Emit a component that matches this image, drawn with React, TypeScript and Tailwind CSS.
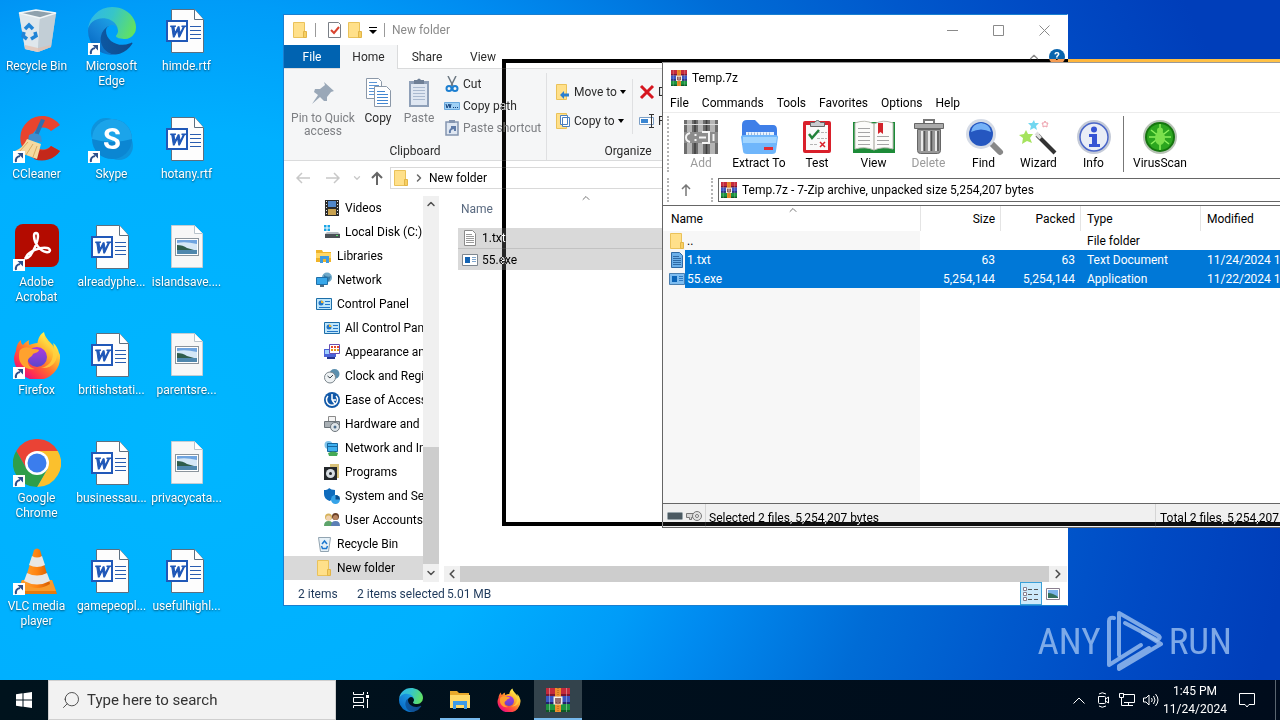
import type { ReactNode } from "react";
import { ChevronDown, ChevronLeft, ChevronRight, ChevronUp, Search } from "lucide-react";

/* ---------- desktop icons ---------- */

function EdgeIcon({ className }: { className: string }) {
  return (
    <svg viewBox="0 0 256 256" className={className}>
      <defs>
        <linearGradient id="edgeA" x1="0" y1="0.5" x2="1" y2="0.5">
          <stop offset="0" stopColor="#0c59a4" />
          <stop offset="1" stopColor="#114a8b" />
        </linearGradient>
        <linearGradient id="edgeB" x1="0.8" y1="0.2" x2="0.2" y2="1">
          <stop offset="0" stopColor="#1b9de2" />
          <stop offset="0.5" stopColor="#1580d4" />
          <stop offset="1" stopColor="#0067c0" />
        </linearGradient>
        <linearGradient id="edgeC" x1="0" y1="0.3" x2="1" y2="0.6">
          <stop offset="0" stopColor="#2fb8e8" />
          <stop offset="0.45" stopColor="#36c5c9" />
          <stop offset="1" stopColor="#62e25f" />
        </linearGradient>
      </defs>
      <g transform="translate(-4.63 -4.92)">
        <path fill="url(#edgeA)" d="M235.68 195.46a93.73 93.73 0 01-10.54 4.71 101.87 101.87 0 01-35.9 6.46c-47.32 0-88.54-32.55-88.54-74.32A31.48 31.48 0 01117.13 105c-42.8 1.8-53.8 46.4-53.8 72.53 0 73.88 68.09 81.37 82.76 81.37 7.91 0 19.84-2.3 27-4.56l1.31-.44a128.34 128.34 0 0066.6-52.8 4 4 0 00-5.32-5.64z" />
        <path fill="url(#edgeB)" d="M110.34 246.34A79.2 79.2 0 0187.6 225a80.72 80.72 0 0129.53-120c3.12-1.47 8.45-4.13 15.54-4a32.35 32.35 0 0125.69 13 31.88 31.88 0 016.36 18.66c0-.21 24.46-79.6-80-79.6-43.9 0-80 41.66-80 78.21a130.15 130.15 0 0012.11 56 128 128 0 00156.38 67.11 75.55 75.55 0 01-62.78-8z" />
        <path fill="url(#edgeC)" d="M156.94 153.78c-.81 1.05-3.3 2.5-3.3 5.66 0 2.61 1.7 5.12 4.72 7.23 14.38 10 41.49 8.68 41.56 8.68a59.56 59.56 0 0030.27-8.35A61.38 61.38 0 00260.6 114.09c.26-22.41-8-37.31-11.34-43.91C228.09 28.76 182.35 4.92 132.61 4.92a128 128 0 00-128 126.2c.48-36.54 36.8-66.05 80-66.05 3.5 0 23.46.34 42 10.07 16.34 8.58 24.9 18.94 30.85 29.21 6.18 10.67 7.28 24.15 7.28 29.52s-2.74 13.33-7.8 19.91z" />
      </g>
    </svg>
  );
}

function FirefoxIcon({ className }: { className: string }) {
  return (
    <svg viewBox="0 0 48 48" className={className}>
      <defs>
        <linearGradient id="foxA" x1="0.85" y1="0.1" x2="0.2" y2="0.9">
          <stop offset="0.05" stopColor="#fff44f" />
          <stop offset="0.35" stopColor="#ffb02e" />
          <stop offset="0.6" stopColor="#ff6a30" />
          <stop offset="0.85" stopColor="#ff2f52" />
          <stop offset="1" stopColor="#e5127f" />
        </linearGradient>
        <linearGradient id="foxB" x1="0.5" y1="0" x2="0.5" y2="1">
          <stop offset="0" stopColor="#b138e0" />
          <stop offset="1" stopColor="#5b47c9" />
        </linearGradient>
      </defs>
      <path fill="url(#foxA)" d="M46 22c-1-4-3-8-6-10 1 3 1 5 1 6C39 12 32 8 31 1c-4 2-6 7-6.500 11-3 0-6 1-8 2-1-2-1-4 0-5-3 1-5 3-6.500 5-2-1-2-3-2-5-3 2-5 7-5 11-1 2-2 5-2 8a23 22 0 0 0 46-2c0-1 0-3-1-4z" />
      <circle cx="24" cy="26" r="10" fill="url(#foxB)" />
      <path fill="#ffa22e" d="M7 19c4-4 9-3 12-1 3 0 6 0 7 1 0 2-4 3-6 4-1 3-4 3-5 6-1 4 2 8 7 9-9 2-16-5-16-12 0-3 0-5 1-7z" />
      <path fill="#ffd23f" opacity="0.8" d="M31 3c0 8 9 11 9 20 0 8-6 13-12 14 12 1 17-8 16-16C42 13 33 10 31 3z" />
    </svg>
  );
}

function ChromeIcon() {
  return (
    <svg viewBox="0 0 48 48" className="size-12">
      <path fill="#ea4335" d="M24 24V12h20.800A24 24 0 0 0 3.200 12l10.400 18z" />
      <path fill="#fbc02d" d="M24 48a24 24 0 0 0 20.800-36H24l10.400 18z" />
      <path fill="#2e9e4b" d="M3.200 12A24 24 0 0 0 24 48l10.400-18H13.600z" />
      <circle cx="24" cy="24" r="12" fill="#fff" />
      <circle cx="24" cy="24" r="9.500" fill="#3b7ded" />
    </svg>
  );
}

function VlcIcon() {
  return (
    <svg viewBox="0 0 48 48" className="size-12">
      <defs>
        <linearGradient id="vlcA" x1="0" y1="0" x2="1" y2="0">
          <stop offset="0" stopColor="#ffa030" />
          <stop offset="0.5" stopColor="#ff8310" />
          <stop offset="1" stopColor="#d55c00" />
        </linearGradient>
      </defs>
      <path fill="#e57a0c" d="M9 33h30l5 14H4z" />
      <path fill="#f99a2b" d="M9 33h30l4 11H5z" />
      <path fill="url(#vlcA)" d="M21 3q3-3 6 0l10 34q-13 8-26 0z" />
      <path fill="#e9e7e4" d="M19 9q5 3 10 0l3 9q-8 4-16 0zM14 26q10 5 20 0l3 8q-13 7-26 0z" />
    </svg>
  );
}

function RecycleBinIcon({ className }: { className: string }) {
  return (
    <svg viewBox="0 0 48 48" className={className}>
      <path fill="#b9c6cf" d="M6 6l37 0-5 34-13 5-13-3z" />
      <path fill="#dfe7ec" d="M6 6l21 5-2 34-13-3z" />
      <path fill="#c2ced6" d="M43 6l-16 5-2 34 13-5z" />
      <path fill="#8fa1ad" stroke="#f2f6f8" strokeWidth="1.500" d="M6 6l17-3 20 3-16 5z" />
      <path fill="#e2bfae" opacity="0.700" d="M12 38l13 3 13-3v2l-13 5-13-3z" />
      <g fill="none" stroke="#2184d6" strokeWidth="3.500">
        <path d="M12 22l4-4 4 4" />
        <path d="M22 25l1 4-5 3" />
        <path d="M14 32l-4-3 1-4" />
      </g>
    </svg>
  );
}

function CCleanerIcon() {
  return (
    <svg viewBox="0 0 48 48" className="size-12">
      <path fill="#e8442e" d="M47 10A22 22 0 1 0 47 36l-9-5a11 11 0 1 1 0-15z" />
      <path fill="#c4281b" d="M47 36a22 22 0 0 1-26 8l6-9c4 1 8 0 11-4z" />
      <path fill="#2f6fae" d="M28 4l4 1-8 18-4-1z" />
      <path fill="#3f8fd0" d="M16 20q6-4 12 1l1 6-14-1z" />
      <path fill="#f5d9a0" d="M14 24l14 5-4 15-22-8q8-3 12-12z" />
      <path fill="none" stroke="#d9ab62" d="M15 27L6 37M20 29l-7 11M24 31l-4 11" />
    </svg>
  );
}

function SkypeIcon() {
  return (
    <svg viewBox="0 0 48 48" className="size-12">
      <circle cx="18" cy="18" r="15" fill="#0e93dc" />
      <circle cx="31" cy="31" r="14" fill="#0e93dc" />
      <circle cx="24" cy="24" r="20" fill="#0b86d2" />
      <path fill="#1ba4ea" d="M24 4a20 20 0 0 1 20 20q-20 6-40 0A20 20 0 0 1 24 4z" />
      <text x="24" y="34" textAnchor="middle" fontSize="29" fontWeight="700" fill="#fff">S</text>
    </svg>
  );
}

function AcrobatIcon() {
  return (
    <svg viewBox="0 0 48 48" className="size-12">
      <rect x="2" y="1" width="44" height="43" rx="8" fill="#b30b00" />
      <path fill="none" stroke="#fff" strokeWidth="2.400" strokeLinejoin="round" d="M13 34c3-6 14-10 21-9 5 1 3 5-1 4-6-1-12-9-12-16 0-4 4-4 4 0 0 6-5 16-8 20-3 3-6 3-4 1z" />
    </svg>
  );
}

function WordDocIcon() {
  return (
    <svg viewBox="0 0 48 48" className="size-12">
      <path fill="#fdfdfd" stroke="#5c6f80" d="M8.500 2.500h23l9 10v33h-32z" />
      <path fill="#fff" stroke="#5c6f80" d="M31.500 2.500v10h9" />
      <path stroke="#2a5db0" d="M27 19.500h11M27 23.500h11M27 27.500h11M27 31.500h11" />
      <rect x="4" y="14" width="20" height="20" fill="#fff" stroke="#2058b8" strokeWidth="2" />
      <text x="14" y="30" textAnchor="middle" fontSize="17" fontWeight="800" fontStyle="italic" fontFamily="Liberation Serif" fill="#2058b8" stroke="#2058b8">W</text>
    </svg>
  );
}

function PictureDocIcon() {
  return (
    <svg viewBox="0 0 48 48" className="size-12">
      <path fill="#f7f7f7" stroke="#c3cdd4" d="M8.500 2.500h23l8 8v34h-31z" />
      <path fill="#fff" stroke="#b9c3cb" d="M31.500 2.500v8h8" />
      <rect x="12.500" y="15.500" width="23" height="17" fill="#fff" stroke="#8b949c" />
      <rect x="14" y="17" width="20" height="14" fill="#6fa4e0" />
      <path fill="#d5e7f7" d="M14 20q8-2 20 1v6H14z" />
      <path fill="#2f5d4c" d="M14 22q6 0 10 3l7 2H14z" />
      <path fill="#4f87ad" d="M14 27h20v4H14z" />
    </svg>
  );
}

function ShortcutArrow() {
  return (
    <svg viewBox="0 0 12 12" className="absolute bottom-0 left-0 size-3 bg-white">
      <path fill="none" stroke="#2c4f8c" strokeWidth="2" d="M3 11q-1-5 4-6" />
      <path fill="#2c4f8c" d="M4.500 2H10v5.500z" />
    </svg>
  );
}

/* ---------- small 16px icons ---------- */

function FolderIcon() {
  return (
    <svg viewBox="0 0 16 16" className="size-4 shrink-0">
      <path fill="#ffe08a" stroke="#eac25a" d="M1.500.500h11v15h-11z" />
      <path fill="#f7cf62" stroke="#e2b548" d="M11.500 9.500h3v6h-3z" />
    </svg>
  );
}

function WinRarIcon({ className }: { className: string }) {
  return (
    <svg viewBox="0 0 24 24" className={className}>
      <rect x="0" y="0" width="24" height="8" fill="#c42a3c" />
      <rect x="0" y="8" width="24" height="8" fill="#3b55c0" />
      <rect x="0" y="16" width="24" height="8" fill="#1d9440" />
      <path fill="#7c1532" d="M0 6h24v2H0z" />
      <path fill="#22226e" d="M0 14h24v2H0z" />
      <path fill="#0d5a26" d="M0 22h24v2H0z" />
      <path stroke="#fff" opacity="0.350" d="M3.500 0v24M20.500 0v24" />
      <rect x="9" y="0" width="6" height="24" fill="#ee8f2c" />
      <path stroke="#a85a16" strokeDasharray="1 1" d="M12 0v24" />
      <rect x="7.500" y="8.500" width="9" height="8" fill="#f6efe6" />
      <path fill="none" stroke="#7a4040" strokeWidth="1.500" d="M10 10v5h4v-5M12 10v4" />
    </svg>
  );
}

function TextFileIcon({ selected }: { selected?: boolean }) {
  return (
    <svg viewBox="0 0 16 16" className="size-4 shrink-0">
      <path fill={selected ? "#6cb0ea" : "#fff"} stroke={selected ? "#2f6aa5" : "#8a8a8a"} d="M2.500.500h8l3 3v12h-11z" />
      <path stroke={selected ? "#2f6aa5" : "#9a9a9a"} d="M4 4.500h6M4 6.500h8M4 8.500h8M4 10.500h8M4 12.500h8" />
    </svg>
  );
}

function ExeIcon({ selected }: { selected?: boolean }) {
  return (
    <svg viewBox="0 0 16 16" className="size-4 shrink-0">
      <path fill={selected ? "#7fbdf0" : "#fff"} stroke={selected ? "#4a7fb0" : "#7d8790"} d="M.500 2.500h15v11H.500z" />
      <path fill={selected ? "#0a64b8" : "#1464b4"} d="M3 5h5v6H3z" />
      <path stroke={selected ? "#2f7cc4" : "#7fa6cc"} d="M10 5.500h4M10 7.500h4M10 9.500h4" />
    </svg>
  );
}

const navArt: Record<string, ReactNode> = {
  videos: (
    <>
      <path fill="#2b2b2b" d="M1 0h14v16H1z" />
      <path fill="#5187c9" d="M4 1h8v6H4z" />
      <path fill="#c9a24f" d="M4 9h8v6H4z" />
      <path stroke="#e9e9e9" strokeDasharray="1 2" strokeWidth="1" d="M2.500 1v14M13.500 1v14" />
    </>
  ),
  disk: (
    <>
      <path fill="#19a5e6" d="M0 1h2.500v2.500H0zM3.500 1H6v2.500H3.500zM0 4.500h2.500V7H0zM3.500 4.500H6V7H3.500z" />
      <path fill="#b5bbc0" d="M3 8h11l2 2H1z" />
      <path fill="#4b5156" d="M1 10h15v4H1z" />
      <path fill="#58e06a" d="M12 11h2v1h-2z" />
    </>
  ),
  libraries: (
    <>
      <path fill="#f0b429" d="M0 2h6l1 2h8v10H0z" />
      <path fill="#ffd766" d="M0 5h15v5H0z" />
      <path fill="#3f9be0" d="M4 15V8h9v7h-3v-4H7v4z" />
    </>
  ),
  network: (
    <>
      <circle cx="11" cy="5.500" r="5" fill="#6fa9c9" />
      <path fill="#3a7ea8" d="M8 3q4 3 7 1l-2 5H8z" />
      <path fill="#37a7ea" stroke="#1f6fa8" d="M.500 5.500h11v7H.500z" />
      <path fill="#4d6d85" d="M4 13h4v2H4z" />
    </>
  ),
  panel: (
    <>
      <path fill="#bfe6fb" stroke="#1d6ea8" d="M.500 2.500h15v11H.500z" />
      <circle cx="5" cy="7" r="2.500" fill="#2476c8" />
      <path fill="#f7b733" d="M5 7V4.500A2.500 2.500 0 0 1 7.500 7z" />
      <path stroke="#2476c8" d="M9 5.500h5M9 8.500h5M3 11.500h11" />
    </>
  ),
  appearance: (
    <>
      <path fill="#4a63d8" d="M0 5h12v8H0z" />
      <path fill="#9fd0ff" d="M1 6h6v4H1z" />
      <path fill="#fff" stroke="#6a4fb0" d="M5.500.500h10v9h-10z" />
      <path stroke="#e8452c" strokeWidth="2" strokeDasharray="2 1" d="M7 3h8" />
      <path stroke="#e79a1c" strokeWidth="2" strokeDasharray="2 1" d="M7 6h8" />
      <path fill="#25358f" d="M3 13h8v2H3z" />
    </>
  ),
  clock: (
    <>
      <circle cx="10.500" cy="6" r="5" fill="#5b8fae" />
      <circle cx="6" cy="9.500" r="5.500" fill="#eef2f4" stroke="#7b858c" />
      <path fill="none" stroke="#39424a" d="M3.500 8l2.500 2 3-3" />
    </>
  ),
  ease: (
    <>
      <circle cx="8" cy="8" r="8" fill="#1259a8" />
      <path fill="none" stroke="#fff" strokeWidth="1.500" d="M8 2v6M8 8h4M8 8l3 4M4 4a5.500 5.500 0 1 0 8 0" />
    </>
  ),
  hardware: (
    <>
      <path fill="#f4f4f4" stroke="#8b8b8b" d="M4.500.500h7v5h-7z" />
      <path fill="#a9b0b5" stroke="#6c747a" d="M.500 5.500h15v6H.500z" />
      <circle cx="11" cy="11" r="4.500" fill="#dfe5e9" stroke="#6c747a" />
      <circle cx="11" cy="11" r="1.500" fill="#4f6f8d" />
    </>
  ),
  internet: (
    <>
      <circle cx="4.500" cy="5" r="4" fill="#7fc3ea" />
      <path fill="#3fb0f0" stroke="#17679f" d="M3.500 3.500h10v8h-10z" />
      <path stroke="#17679f" d="M4 6.500h10" />
      <path fill="#45a955" d="M4 13q5-3 10 0l-1 3H5z" />
    </>
  ),
  programs: (
    <>
      <path fill="#d9c27a" d="M6 0h9v14H6z" />
      <path fill="#23272b" d="M0 3h13v13H0z" />
      <circle cx="6.500" cy="9.500" r="4.500" fill="#d7dde2" />
      <circle cx="6.500" cy="9.500" r="1.500" fill="#23272b" />
    </>
  ),
  security: (
    <>
      <path fill="#0f6cbd" d="M0 2q4 0 5-2 2 2 6 2v4q0 5-5.500 7Q0 11 0 6z" />
      <circle cx="11.500" cy="11.500" r="4.500" fill="#36a3e8" />
      <path fill="#0b4f8f" d="M11.500 11.500V7a4.500 4.500 0 0 1 4.500 4.500z" />
    </>
  ),
  users: (
    <>
      <circle cx="4.500" cy="5" r="3.500" fill="#d6b35c" />
      <circle cx="4.500" cy="6" r="2.500" fill="#f1d3b1" />
      <path fill="#5da36a" d="M0 14q0-5 4.500-5T9 14z" />
      <circle cx="11.500" cy="4.500" r="3.500" fill="#6b4128" />
      <circle cx="11.500" cy="5.500" r="2.500" fill="#b98560" />
      <path fill="#5b7fb5" d="M7 14q0-5 4.500-5t4.500 5z" />
    </>
  ),
  bin: (
    <>
      <path fill="#e6f1f8" stroke="#92a4b1" d="M2.500 1.500h12l-2 14h-8z" />
      <path fill="none" stroke="#1d78cf" strokeWidth="1.500" d="M6 8l2.500-3L11 8M5.500 10l1 2.500h4l1-2.500" />
    </>
  ),
};

/* ---------- data ---------- */

const desktopItems: { label: string; icon: ReactNode; shortcut?: boolean }[] = [
  { label: "Recycle Bin", icon: <RecycleBinIcon className="size-12" /> },
  { label: "CCleaner", icon: <CCleanerIcon />, shortcut: true },
  { label: "Adobe Acrobat", icon: <AcrobatIcon />, shortcut: true },
  { label: "Firefox", icon: <FirefoxIcon className="size-12" />, shortcut: true },
  { label: "Google Chrome", icon: <ChromeIcon />, shortcut: true },
  { label: "VLC media player", icon: <VlcIcon />, shortcut: true },
  { label: "Microsoft Edge", icon: <EdgeIcon className="size-12" />, shortcut: true },
  { label: "Skype", icon: <SkypeIcon />, shortcut: true },
  { label: "alreadyphe...", icon: <WordDocIcon /> },
  { label: "britishstati...", icon: <WordDocIcon /> },
  { label: "businessau...", icon: <WordDocIcon /> },
  { label: "gamepeopl...", icon: <WordDocIcon /> },
  { label: "himde.rtf", icon: <WordDocIcon /> },
  { label: "hotany.rtf", icon: <WordDocIcon /> },
  { label: "islandsave....", icon: <PictureDocIcon /> },
  { label: "parentsre...", icon: <PictureDocIcon /> },
  { label: "privacycata...", icon: <PictureDocIcon /> },
  { label: "usefulhighl...", icon: <WordDocIcon /> },
];

const navItems = [
  { label: "Videos", art: "videos", deep: true },
  { label: "Local Disk (C:)", art: "disk", deep: true },
  { label: "Libraries", art: "libraries", deep: false },
  { label: "Network", art: "network", deep: false },
  { label: "Control Panel", art: "panel", deep: false },
  { label: "All Control Panel Items", art: "panel", deep: true },
  { label: "Appearance and Personalization", art: "appearance", deep: true },
  { label: "Clock and Region", art: "clock", deep: true },
  { label: "Ease of Access", art: "ease", deep: true },
  { label: "Hardware and Sound", art: "hardware", deep: true },
  { label: "Network and Internet", art: "internet", deep: true },
  { label: "Programs", art: "programs", deep: true },
  { label: "System and Security", art: "security", deep: true },
  { label: "User Accounts", art: "users", deep: true },
  { label: "Recycle Bin", art: "bin", deep: false },
  { label: "New folder", art: "folder", deep: false },
];

const archiveRows = [
  { name: "..", size: "", packed: "", type: "File folder", modified: "", icon: <FolderIcon />, selected: false },
  { name: "1.txt", size: "63", packed: "63", type: "Text Document", modified: "11/24/2024 1:26 PM", icon: <TextFileIcon selected />, selected: true },
  { name: "55.exe", size: "5,254,144", packed: "5,254,144", type: "Application", modified: "11/22/2024 11:04 AM", icon: <ExeIcon selected />, selected: true },
];

/* ---------- explorer window ---------- */

function TitleBar() {
  return (
    <header className="flex h-[30px] items-center pl-2 text-[#8a8a8a]">
      <FolderIcon />
      <span className="mx-[7px] h-3.5 w-px bg-[#9a9a9a]" />
      <svg viewBox="0 0 16 16" className="ml-1 size-4">
        <path fill="#fff" stroke="#7a7f86" d="M1.500.500h10l2 2v13h-12z" />
        <path fill="none" stroke="#d8432f" strokeWidth="2" d="M4 8l3 3 5-6" />
      </svg>
      <span className="ml-1">
        <FolderIcon />
      </span>
      <svg viewBox="0 0 8 8" className="ml-1.5 size-2">
        <path stroke="#000" d="M0 1.500h8" />
        <path fill="#000" d="M0 4h8L4 8z" />
      </svg>
      <span className="mx-[7px] h-3.5 w-px bg-[#9a9a9a]" />
      <h1>New folder</h1>
      <div className="ml-auto flex h-full">
        <button aria-label="Minimize" className="grid w-[46px] place-items-center">
          <svg viewBox="0 0 11 11" className="size-[11px]"><path stroke="#8a8a8a" d="M0 5.500h11" /></svg>
        </button>
        <button aria-label="Maximize" className="grid w-[46px] place-items-center">
          <svg viewBox="0 0 11 11" className="size-[11px]"><path fill="none" stroke="#8a8a8a" d="M.500.500h10v10H.500z" /></svg>
        </button>
        <button aria-label="Close" className="grid w-[46px] place-items-center">
          <svg viewBox="0 0 11 11" className="size-[11px]"><path stroke="#8a8a8a" d="M.500.500l10 10M10.500.500l-10 10" /></svg>
        </button>
      </div>
    </header>
  );
}

function Ribbon() {
  return (
    <>
      <nav className="flex h-6 items-stretch border-b border-[#dadbdc] text-[#2b2b2b]">
        <button className="w-14 bg-[#0063b1] text-white">File</button>
        <button className="-mb-px w-[58px] border-r border-[#dadbdc] bg-[#f5f6f7]">Home</button>
        <button className="w-[58px]">Share</button>
        <button className="w-[54px]">View</button>
        <div className="ml-auto flex items-center gap-2 pr-0.5">
          <ChevronUp className="size-3.5 text-[#888]" strokeWidth={2} />
          <span className="grid size-4 place-items-center rounded-full bg-[#0a64ad] text-[11px] font-bold text-white">?</span>
        </div>
      </nav>
      <div className="flex h-[92px] border-b border-[#dadbdc] bg-[#f5f6f7] text-[#2b2b2b]">
        <section className="mt-1 flex w-[263px] flex-col border-r border-[#dfe0e2]">
          <div className="flex flex-1 items-start">
            <button className="flex w-[78px] flex-col items-center gap-[3px] text-[#7d7f83]">
              <svg viewBox="0 0 24 24" className="mt-1 h-8 w-6">
                <path fill="#9aa8b8" d="M13 1l10 9-3 1-4 5 0 4-3 0-4-4-8 7 6-9-4-3 1-3 5 0 5-4z" />
              </svg>
              <span className="leading-[13px]">Pin to Quick access</span>
            </button>
            <button className="flex w-8 flex-col items-center gap-[3px]">
              <svg viewBox="0 0 25 30" className="mt-1 h-8 w-[25px]">
                <path fill="#fff" stroke="#8b98a8" d="M.500.500h12l3 3v17H.500z" />
                <path stroke="#5b95d6" d="M3 4.500h8M3 7.500h10M3 10.500h10M3 13.500h10M3 16.500h10" />
                <path fill="#fff" stroke="#8b98a8" d="M8.500 8.500h12l4 4v16h-16z" />
                <path stroke="#4286d1" d="M11 13.500h8M11 16.500h11M11 19.500h11M11 22.500h11M11 25.500h11" />
              </svg>
              <span className="leading-[13px]">Copy</span>
            </button>
            <button className="flex w-[50px] flex-col items-center gap-[3px] text-[#7d7f83]">
              <svg viewBox="0 0 22 30" className="mt-1 h-8 w-[22px]">
                <path fill="#8fa0b8" d="M1 3h20v26H1z" />
                <path fill="#dfe7f2" d="M3 6h16v21H3z" />
                <path fill="#6e7f96" d="M6 2h3q2-3 4 0h3v4H6z" />
                <path stroke="#a9b9cf" d="M5 9.500h12M5 12.500h12M5 15.500h12M5 18.500h12M5 21.500h12" />
              </svg>
              <span className="leading-[13px]">Paste</span>
            </button>
            <div className="flex flex-col">
              <button className="flex h-[22px] items-center gap-[3px]">
                <svg viewBox="0 0 16 16" className="size-4">
                  <path stroke="#6d7882" strokeWidth="1.500" d="M4 0l5 10M12 0L7 10" />
                  <circle cx="5" cy="12.500" r="2.500" fill="none" stroke="#1d7fd0" strokeWidth="2" />
                  <circle cx="11" cy="12.500" r="2.500" fill="none" stroke="#1d7fd0" strokeWidth="2" />
                </svg>
                Cut
              </button>
              <button className="flex h-[22px] items-center gap-[3px]">
                <svg viewBox="0 0 16 16" className="size-4">
                  <path fill="#9fd0f5" stroke="#6aa8dd" d="M.500 4.500h15v7H.500z" />
                  <path fill="none" stroke="#123f7a" d="M2 6l1 4 2-4 1 4 1-4M9 9.500h1M11 9.500h1M13 9.500h1" />
                </svg>
                Copy path
              </button>
              <button className="flex h-[22px] items-center gap-[3px] whitespace-nowrap text-[#7d7f83]">
                <svg viewBox="0 0 16 16" className="size-4">
                  <path fill="#dfe7f2" stroke="#8495b0" strokeWidth="1.500" d="M2 2h12v13H2z" />
                  <path fill="#8495b0" d="M5 0h6v3H5z" />
                  <path fill="none" stroke="#5f7ba8" strokeWidth="2" d="M6 13q-1-4 4-5M7 7h4v4" />
                </svg>
                Paste shortcut
              </button>
            </div>
          </div>
          <h2 className="text-center leading-[18px]">Clipboard</h2>
        </section>
        <section className="mt-1 flex w-[162px] flex-col">
          <div className="flex flex-1 items-start pt-1.5">
            <div className="flex w-[86px] flex-col gap-[3px] border-r border-[#dfe0e2] pl-2">
              <button className="flex h-[26px] items-center gap-[3px]">
                <svg viewBox="0 0 16 16" className="size-4">
                  <path fill="#ffe08a" stroke="#eac25a" d="M1.500.500h10v15h-10z" />
                  <path fill="#2a7fd0" d="M5 11l4-4v2.500h5v3H9V15z" />
                </svg>
                Move to
                <svg viewBox="0 0 6 4" className="h-1 w-1.5"><path d="M0 0h6L3 4z" /></svg>
              </button>
              <button className="flex h-[26px] items-center gap-[3px]">
                <svg viewBox="0 0 16 16" className="size-4">
                  <path fill="#ffe08a" stroke="#eac25a" d="M1.500.500h10v15h-10z" />
                  <path fill="#fff" stroke="#4a7fc0" d="M5.500 2.500h7v9h-7zM7.500 4.500h7v9h-7z" />
                </svg>
                Copy to
                <svg viewBox="0 0 6 4" className="h-1 w-1.5"><path d="M0 0h6L3 4z" /></svg>
              </button>
            </div>
            <div className="flex flex-col gap-[3px] pl-1.5">
              <button className="flex h-[26px] items-center gap-[3px]">
                <svg viewBox="0 0 16 16" className="size-4"><path stroke="#d6161f" strokeWidth="3" d="M2 2l12 12M14 2L2 14" /></svg>
                Delete
              </button>
              <button className="flex h-[26px] items-center gap-[3px]">
                <svg viewBox="0 0 16 16" className="size-4">
                  <path fill="#fff" stroke="#7c9fc6" d="M.500 4.500h14v7H.500z" />
                  <path fill="#3a86d2" d="M2 6h7v4H2z" />
                  <path fill="none" stroke="#333" d="M10 1.500h5M12.500 2v12M10 14.500h5" />
                </svg>
                Rename
              </button>
            </div>
          </div>
          <h2 className="text-center leading-[18px]">Organize</h2>
        </section>
      </div>
    </>
  );
}

function AddressRow() {
  return (
    <div className="flex h-[34px] shrink-0 items-center pr-2">
      <button aria-label="Back" className="w-[38px] pl-3">
        <svg viewBox="0 0 14 12" className="h-3 w-3.5"><path fill="none" stroke="#c8c8c8" strokeWidth="1.500" d="M14 6H1M6 1L1 6l5 5" /></svg>
      </button>
      <button aria-label="Forward" className="w-[30px] pl-1">
        <svg viewBox="0 0 14 12" className="h-3 w-3.5"><path fill="none" stroke="#c8c8c8" strokeWidth="1.500" d="M0 6h13M8 1l5 5-5 5" /></svg>
      </button>
      <button aria-label="Recent locations" className="w-3">
        <ChevronDown className="size-2.5 text-[#c8c8c8]" strokeWidth={3} />
      </button>
      <button aria-label="Up" className="w-[26px] pl-1.5">
        <svg viewBox="0 0 14 14" className="size-3.5"><path fill="none" stroke="#666" strokeWidth="2" d="M7 14V2M2 7l5-5 5 5" /></svg>
      </button>
      <div className="flex h-[22px] flex-1 items-center gap-1 border border-[#d9d9d9] pl-0.5">
        <FolderIcon />
        <ChevronRight className="size-3 text-[#666]" strokeWidth={3} />
        <button>New folder</button>
      </div>
    </div>
  );
}

function ExplorerWindow() {
  return (
    <section className="absolute top-[14px] left-[283px] flex h-[592px] w-[785px] flex-col border border-[#1a7fd0] border-r-white bg-white">
      <TitleBar />
      <Ribbon />
      <AddressRow />
      <div className="flex min-h-0 flex-1 pt-px">
        <ul className="w-[139px] overflow-hidden">
          {navItems.map((item) => (
            <li key={item.label} className={item.art === "folder" ? "bg-[#d9d9d9]" : ""}>
              <button className={`flex h-6 items-center gap-[5px] whitespace-nowrap ${item.deep ? "pl-10" : "pl-8"}`}>
                {item.art === "folder" ? (
                  <FolderIcon />
                ) : (
                  <svg viewBox="0 0 16 16" className="size-4 shrink-0">{navArt[item.art]}</svg>
                )}
                {item.label}
              </button>
            </li>
          ))}
        </ul>
        <div className="flex w-4 flex-col bg-[#f0f0f0] text-[#505050]">
          <ChevronUp className="m-0.5 size-3" strokeWidth={3} />
          <div className="mt-auto h-[117px] bg-[#cdcdcd]" />
          <ChevronDown className="mx-0.5 my-[3px] size-3" strokeWidth={3} />
        </div>
        <div className="ml-[5px] flex min-w-0 flex-1 flex-col">
          <div className="relative flex-1 pl-3.5">
            <ChevronUp className="absolute -top-1 left-[136px] size-3 text-[#777]" strokeWidth={2} />
            <table className="w-full border-separate border-spacing-0">
              <thead>
                <tr>
                  <th className="h-8 pt-1.5 pl-[3px] text-left align-top leading-[14px] font-normal text-[#5a6a80]">Name</th>
                </tr>
              </thead>
              <tbody className="bg-[#d9d9d9]">
                <tr>
                  <td className="h-[21px] border-b border-[#c2c2c2] p-0 pl-1">
                    <span className="flex items-center gap-1"><TextFileIcon />1.txt</span>
                  </td>
                </tr>
                <tr>
                  <td className="h-[21px] p-0 pl-1">
                    <span className="flex items-center gap-1"><ExeIcon />55.exe</span>
                  </td>
                </tr>
              </tbody>
            </table>
          </div>
          <div className="flex h-4 items-center bg-[#f0f0f0] text-[#505050]">
            <ChevronLeft className="mx-px size-3.5" strokeWidth={3} />
            <div className="h-full flex-1 bg-[#cdcdcd]" />
            <ChevronRight className="mx-0.5 size-3.5" strokeWidth={3} />
          </div>
        </div>
      </div>
      <footer className="flex h-[23px] shrink-0 items-center pl-3.5 text-[#1e395b]">
        <span className="w-[59px]">2 items</span>
        <span className="w-[90px] whitespace-nowrap">2 items selected</span>
        <span>5.01 MB</span>
        <div className="ml-auto flex h-full items-center pr-[3px]">
          <button aria-label="Details view" className="grid h-full w-[22px] place-items-center border border-[#3aa0d8] bg-[#cdeafa]">
            <svg viewBox="0 0 16 14" className="h-3.5 w-4">
              <path fill="#fff" stroke="#8a7f8f" d="M.500.500h3v3h-3zM.500 5.500h3v3h-3zM.500 10.500h3v3h-3z" />
              <path stroke="#555" d="M5 2.500h4M5 7.500h4M5 12.500h4M11 2.500h4M11 7.500h4M11 12.500h4" />
            </svg>
          </button>
          <button aria-label="Thumbnail view" className="grid h-full w-[22px] place-items-center">
            <svg viewBox="0 0 14 12" className="h-3 w-3.5">
              <path fill="#fff" stroke="#8a7f8f" d="M.500.500h13v11H.500z" />
              <path fill="#7db4ea" d="M2 2h10v8H2z" />
              <path fill="#34705c" d="M2 5q5 0 10 4v1H2z" />
            </svg>
          </button>
        </div>
      </footer>
    </section>
  );
}

/* ---------- archive window ---------- */

const toolbarArt: Record<string, ReactNode> = {
  Add: (
    <>
      <path fill="#6d6d6d" d="M0 0h34v34H0z" />
      <path fill="#b5b5b5" d="M3 0h5v34H3zM14 0h5v34h-5zM26 0h5v34h-5z" />
      <path stroke="#3e3e3e" strokeWidth="1.500" d="M11 0v34M22.500 0v34" />
      <path stroke="#dcdcdc" d="M0 4.500h34" />
      <path fill="#8c8c8c" d="M0 12h34v11H0z" />
      <path fill="none" stroke="#f4f4f4" strokeWidth="2" d="M6 13q-4 1-4 4.500T6 22M11.500 14v2M11.500 19v2M15 17.500h7M18 12h7v11h-7M29.500 14v7" />
    </>
  ),
  "Extract To": (
    <>
      <path fill="#3f7fe8" d="M0 5q0-5 5-5h8l5 5h13q4 0 4 5v15H0z" />
      <path fill="#e8f2fd" d="M4 12h28v8H4z" />
      <path stroke="#9db8dd" strokeDasharray="1 2" strokeWidth="3" d="M6 14h24" />
      <path fill="#6fb6fb" d="M-1 17q0-2 3-2h31q3 0 3 2l-2 14q0 3-4 3H5q-4 0-4-3z" />
      <path fill="#9fd4ff" d="M1 17h34l-1 6H1z" />
      <path fill="#e02d34" d="M22 27h9v3h-9z" />
    </>
  ),
  Test: (
    <>
      <rect x="3" y="1" width="28" height="32" rx="2" fill="#d9202b" />
      <path fill="#fafafa" d="M6 5h22v25H6z" />
      <path fill="#c9ccd0" stroke="#666" d="M10.500 2.500h4q3-4 6 0h4v4h-14z" />
      <path stroke="#b5b5b5" strokeDasharray="3 1" d="M17 12.500h10M17 18.500h10M10 24.500h8" />
      <path fill="none" stroke="#23813a" strokeWidth="2.500" d="M9 14l3 4 7-8" />
      <path stroke="#d9202b" strokeWidth="1.500" d="M20 22l5 5M25 22l-5 5" />
    </>
  ),
  View: (
    <>
      <path fill="#1d8b38" d="M-4 2h42v31H-4z" />
      <path fill="#fcfcfa" stroke="#bcbcb4" d="M-2 3q10-4 19 1v26q-9-4-19-1zM36 3q-10-4-19 1v26q9-4 19-1z" />
      <path stroke="#a5a5a5" d="M1 8.500h12M1 12.500h12M1 16.500h12M1 20.500h12M1 24.500h12M20 16.500h12M20 20.500h12M20 24.500h12" />
      <path fill="#d2232a" d="M21 3h5v11l-2.500-2-2.500 2z" />
    </>
  ),
  Delete: (
    <>
      <path fill="none" stroke="#777" strokeWidth="2" d="M12 3V0h10v3" />
      <path fill="#aaa" stroke="#666" d="M2.500 3.500h29v5h-29z" />
      <path fill="#999" stroke="#666" d="M5.500 9.500h23v21q0 3-3 3h-17q-3 0-3-3z" />
      <path stroke="#e8e8e8" strokeWidth="2" d="M10 11v20M17 11v20M24 11v20" />
      <path stroke="#555" strokeWidth="1.500" d="M12.500 11v20M19.500 11v20M26 11v20" />
    </>
  ),
  Find: (
    <>
      <path stroke="#888" strokeWidth="6" strokeLinecap="round" d="M25 24l8 8" />
      <circle cx="14" cy="14" r="15" fill="#d5dbe6" />
      <circle cx="14" cy="14" r="12" fill="#2557c0" />
      <path fill="#76b2f7" d="M4 12q1-8 10-9 9 1 10 9-10-5-20 0z" />
    </>
  ),
  Wizard: (
    <>
      <path stroke="#333" strokeWidth="4" d="M15 15l18 18" />
      <path stroke="#ddd" strokeWidth="4" d="M14 13l5 5" />
      <path stroke="#999" d="M17 14l17 17" />
      <path fill="#a5e35e" d="M4 10l2 4 5 0-3 4 2 5-5-2-5 3 1-6-4-3 5-1z" />
      <path fill="#71d7f0" d="M12 0l1 3 4 0-3 3 1 4-3-2-4 2 1-4-3-3h4z" />
      <path fill="none" stroke="#eda0ac" d="M23 1l1 2 2 0-1 2 0 2-2-1-2 1 0-2-1-2h2z" />
    </>
  ),
  Info: (
    <>
      <circle cx="17" cy="17" r="17" fill="#c5cbd8" />
      <circle cx="17" cy="17" r="14" fill="#e9edf6" stroke="#4a66c8" strokeWidth="1.500" />
      <circle cx="17" cy="9.500" r="3" fill="#3654d4" />
      <path fill="#3654d4" d="M12 14h8v10h3v3H12v-3h3v-7h-3z" />
    </>
  ),
  VirusScan: (
    <>
      <circle cx="17" cy="17" r="17" fill="#b7c2b5" />
      <circle cx="17" cy="17" r="15" fill="#15760e" />
      <circle cx="17" cy="17" r="13" fill="#2ca61f" />
      <path stroke="#8cf05c" strokeWidth="1.500" d="M17 4v26M8 10l18 14M26 10L8 24M6 17h22" />
      <ellipse cx="17" cy="18" rx="5" ry="7" fill="#7be04c" />
      <circle cx="17" cy="10.500" r="3" fill="#7be04c" />
    </>
  ),
};

const toolbarItems = [
  { label: "Add", width: "w-[58px]", disabled: true },
  { label: "Extract To", width: "w-[58px]", disabled: false },
  { label: "Test", width: "w-[58px]", disabled: false },
  { label: "View", width: "w-[55px]", disabled: false },
  { label: "Delete", width: "w-[55px]", disabled: true },
  { label: "Find", width: "w-[55px]", disabled: false },
  { label: "Wizard", width: "w-[55px]", disabled: false },
  { label: "Info", width: "w-[55px]", disabled: false },
];

function ToolButton({ label, width, disabled }: { label: string; width: string; disabled: boolean }) {
  return (
    <button disabled={disabled} className={`flex shrink-0 flex-col items-center gap-px whitespace-nowrap ${width} ${disabled ? "text-[#9a9a9a]" : ""}`}>
      <svg viewBox="0 0 34 34" className="size-[34px] overflow-visible">{toolbarArt[label]}</svg>
      <span className="leading-4">{label}</span>
    </button>
  );
}

function ArchiveWindow() {
  return (
    <section className="absolute top-[62px] left-[662px] flex h-[466px] w-[760px] flex-col border border-[#666] bg-white">
      <header className="flex h-[30px] shrink-0 items-center gap-[5px] pl-2">
        <WinRarIcon className="size-4" />
        <h2>Temp.7z</h2>
      </header>
      <nav className="flex h-5 shrink-0 items-center gap-[13px] border-b border-[#ececec] pl-[7px]">
        {["File", "Commands", "Tools", "Favorites", "Options", "Help"].map((name) => (
          <button key={name}>{name}</button>
        ))}
      </nav>
      <div className="flex h-[61px] shrink-0 items-start pt-[7px] pl-1">
        <span className="-mt-1 mr-[3px] h-14 border-l-2 border-dotted border-[#b5b5b5]" />
        {toolbarItems.map((item) => (
          <ToolButton key={item.label} {...item} />
        ))}
        <span className="-mt-1 ml-0.5 h-14 w-px bg-[#777]" />
        <ToolButton label="VirusScan" width="w-[72px]" disabled={false} />
      </div>
      <div className="flex h-[31px] shrink-0 items-center pl-1">
        <span className="h-6 border-l-2 border-dotted border-[#b5b5b5]" />
        <button aria-label="Up one level" className="grid w-[34px] place-items-center">
          <svg viewBox="0 0 12 12" className="size-3"><path fill="none" stroke="#777" strokeWidth="1.500" d="M6 12V1M2 5l4-4 4 4" /></svg>
        </button>
        <span className="ml-2 h-6 border-l-2 border-dotted border-[#b5b5b5]" />
        <label className="ml-[5px] flex h-6 flex-1 items-center gap-[5px] border border-[#666] pl-0.5">
          <WinRarIcon className="size-4 shrink-0" />
          <input
            aria-label="Archive path"
            className="w-full outline-none"
            defaultValue="Temp.7z - 7-Zip archive, unpacked size 5,254,207 bytes"
          />
        </label>
      </div>
      <div className="relative min-h-0 flex-1 border-y border-[#666] bg-[linear-gradient(to_right,#f7f7f7_257px,#fff_257px)]">
        <ChevronUp className="absolute -top-0.5 left-[124px] size-3 text-[#777]" strokeWidth={2} />
        <table className="w-full table-fixed border-separate border-spacing-0">
          <thead>
            <tr className="h-[25px] bg-white text-left [&>th]:border-r [&>th]:border-[#e4e4e4] [&>th]:p-0 [&>th]:font-normal">
              <th className="w-[258px]"><span className="pl-2">Name</span></th>
              <th className="w-20 text-right"><span className="pr-[5px]">Size</span></th>
              <th className="w-20 text-right"><span className="pr-[5px]">Packed</span></th>
              <th className="w-[120px]"><span className="pl-1.5">Type</span></th>
              <th><span className="pl-1.5">Modified</span></th>
            </tr>
          </thead>
          <tbody>
            {archiveRows.map((row) => {
              const fill = row.selected ? "bg-[#0078d7] text-white" : "";
              return (
                <tr key={row.name} className="h-[19px] leading-[18px] [&>td]:p-0 [&>td]:align-bottom">
                  <td>
                    <div className="flex h-[19px] items-center pl-1.5">
                      {row.icon}
                      <span className={`h-[19px] flex-1 pt-px pl-0.5 ${fill}`}>{row.name}</span>
                    </div>
                  </td>
                  <td className={`text-right ${fill}`}><span className="pr-1.5">{row.size}</span></td>
                  <td className={`text-right ${fill}`}><span className="pr-1.5">{row.packed}</span></td>
                  <td className={fill}><span className="pl-1.5">{row.type}</span></td>
                  <td className={fill}><span className="pl-1.5">{row.modified}</span></td>
                </tr>
              );
            })}
          </tbody>
        </table>
      </div>
      <footer className="flex h-[23px] shrink-0 items-center bg-[#f0f0f0] pl-1">
        <svg viewBox="0 0 16 8" className="h-2 w-4">
          <rect x="0.500" y="0.500" width="15" height="7" rx="1" fill="#4c5a62" stroke="#99a5ab" />
        </svg>
        <svg viewBox="0 0 16 12" className="ml-[3px] h-3 w-4">
          <path fill="#d8d8d8" stroke="#777" d="M.500 3.500h7v4h-2v2h-2v-2h-3z" />
          <circle cx="11" cy="6" r="4.500" fill="#e4e4e4" stroke="#777" />
          <circle cx="11" cy="6" r="1.500" fill="#fff" stroke="#777" />
        </svg>
        <p className="ml-[3px] h-full w-[451px] border-x border-[#d5d5d5] pt-[5px] pl-[3px] leading-[18px]">Selected 2 files, 5,254,207 bytes</p>
        <p className="h-full pt-[5px] pl-1 leading-[18px] whitespace-nowrap">Total 2 files, 5,254,207 bytes</p>
      </footer>
    </section>
  );
}

/* ---------- taskbar ---------- */

function Taskbar() {
  return (
    <footer className="relative flex h-10 shrink-0 items-stretch bg-[linear-gradient(to_right,#00131d,#000c1c)] text-white">
      <button aria-label="Start" className="grid w-12 place-items-center">
        <svg viewBox="0 0 16 16" className="size-4">
          <path fill="#fff" d="M0 2.200l6.500-.9v6.200H0zM7.500 1.200L16 0v7.500H7.500zM0 8.500h6.500v6.200L0 13.800zM7.500 8.500H16V16l-8.500-1.200z" />
        </svg>
      </button>
      <label className="flex w-72 items-center gap-1.5 border border-[#cfcfcf] bg-[#f2f2f2] pl-3 text-[#333]">
        <Search className="size-5 shrink-0 -scale-x-100" strokeWidth={1} />
        <input aria-label="Search" className="w-full text-[15px] outline-none placeholder:text-[#333]" placeholder="Type here to search" />
      </label>
      <button aria-label="Task View" className="grid w-[50px] place-items-center">
        <svg viewBox="0 0 16 16" className="size-4">
          <path fill="none" stroke="#fff" d="M.500 0v2.500h10V0M.500 5.500h10v5H.500zM.500 16v-2.500h10V16M14.500 0v2M14.500 7v9" />
          <path fill="#fff" d="M13 3h3v3h-3z" />
        </svg>
      </button>
      <button aria-label="Edge" className="grid w-[49px] place-items-center">
        <EdgeIcon className="size-6" />
      </button>
      <button aria-label="File Explorer" className="flex w-[49px] flex-col items-center">
        <svg viewBox="0 0 20 20" className="mt-2.5 mb-2 size-5">
          <path fill="#e8a92c" d="M0 1h7l2 2h10v15H0z" />
          <path fill="#ffd968" d="M0 5h20v13H0z" />
          <path fill="#3d9ae8" d="M3 19v-8h14v8h-3v-4H6v4z" />
        </svg>
        <span className="h-0.5 w-10 bg-[#76b9ed]" />
      </button>
      <button aria-label="Firefox" className="grid w-[50px] place-items-center">
        <FirefoxIcon className="size-6" />
      </button>
      <button aria-label="WinRAR" className="flex w-12 flex-col items-center justify-between border-b-2 border-[#76b9ed] bg-[#33434c] pt-2">
        <WinRarIcon className="size-6" />
      </button>
      <div className="ml-auto flex items-center">
        <button aria-label="Show hidden icons" className="grid w-6 place-items-center">
          <svg viewBox="0 0 12 7" className="h-[7px] w-3"><path fill="none" stroke="#fff" d="M.500 6.500L6 1l5.500 5.500" /></svg>
        </button>
        <button aria-label="Meet Now" className="grid w-6 place-items-center">
          <svg viewBox="0 0 14 16" className="h-4 w-3.5">
            <path fill="none" stroke="#fff" d="M2.500 4.500h6q1 0 1 1v5q0 1-1 1h-5q-1 0-1-1zM9.500 7l3-2v6l-3-2M3 2q3-2.500 7 0M3 14q3 2.500 7 0" />
          </svg>
        </button>
        <button aria-label="Network" className="grid w-6 place-items-center">
          <svg viewBox="0 0 16 14" className="h-3.5 w-4">
            <path fill="none" stroke="#fff" d="M4.500 3V.500m0 1h11v8H5M9.500 9.500v3M6 12.500h8M.500.500h4v4h-4zM2.500 4.500v8H6" />
          </svg>
        </button>
        <button aria-label="Volume" className="grid w-6 place-items-center">
          <svg viewBox="0 0 16 14" className="h-3.5 w-4">
            <path fill="none" stroke="#fff" d="M.500 5v4H3l3 3V2L3 5zM8.500 5q1.500 2 0 4M10.500 3q3 4 0 8M12.500 1q5 6 0 12" />
          </svg>
        </button>
        <button className="w-16 text-center leading-[18px] whitespace-nowrap">
          1:45 PM
          <br />
          11/24/2024
        </button>
        <button aria-label="Notifications" className="grid w-10 place-items-center">
          <svg viewBox="0 0 16 16" className="size-4"><path fill="none" stroke="#fff" d="M.500 1.500h15v11H10L8 15l-2-2.500H.500z" /></svg>
        </button>
        <span className="mr-1 ml-2 h-10 w-px bg-[#5a6670]" />
      </div>
    </footer>
  );
}

function Watermark() {
  return (
    <div className="absolute right-12 bottom-12 flex items-center font-['Roboto_Condensed','Open_Sans_Condensed','Liberation_Sans',sans-serif] text-[37px] leading-none text-[#9cc0f0]/80">
      <span>ANY</span>
      <svg viewBox="0 0 56 62" className="mx-1.5 h-[62px] w-14">
        <g fill="none" stroke="currentColor" strokeWidth="4" strokeLinejoin="round" strokeLinecap="round">
          <path d="M7 8Q2 7 2 11v44l32-20" />
          <path d="M12 45V3l40 23q2 2-2 4L18 13" />
          <path d="M12 59l42-25-18-11M12 59v-3l30-18" />
        </g>
      </svg>
      <span>RUN</span>
    </div>
  );
}

export default function App() {
  return (
    <div className="relative flex min-h-screen w-full flex-col overflow-hidden bg-[radial-gradient(ellipse_86%_139%_at_15%_60%,#00b6ff_0%,#00b0ff_30%,#009cf8_43%,#008bf0_50%,#006cd6_64%,#0058cc_77%,#004ac4_88%,#003eba_100%)] font-['Roboto','Open_Sans',sans-serif] text-[12px] leading-4 text-black">
      <main className="flex-1">
        <ul className="-ml-px grid grid-flow-col grid-cols-[75px_75px_75px] grid-rows-[repeat(6,108px)] pt-[7px]">
          {desktopItems.map((item) => (
            <li key={item.label}>
              <button className="flex w-full flex-col items-center gap-1">
                <span className="relative">
                  {item.icon}
                  {item.shortcut && <ShortcutArrow />}
                </span>
                <span className="leading-[15px] text-white [text-shadow:0_1px_2px_rgba(0,0,0,0.6)]">{item.label}</span>
              </button>
            </li>
          ))}
        </ul>
        <ExplorerWindow />
        <ArchiveWindow />
        {/* drag outline, inverts whatever is under it */}
        <div className="pointer-events-none absolute top-[59px] left-[502px] h-[467px] w-[920px] border-4 border-white mix-blend-difference" />
        <Watermark />
      </main>
      <Taskbar />
    </div>
  );
}
